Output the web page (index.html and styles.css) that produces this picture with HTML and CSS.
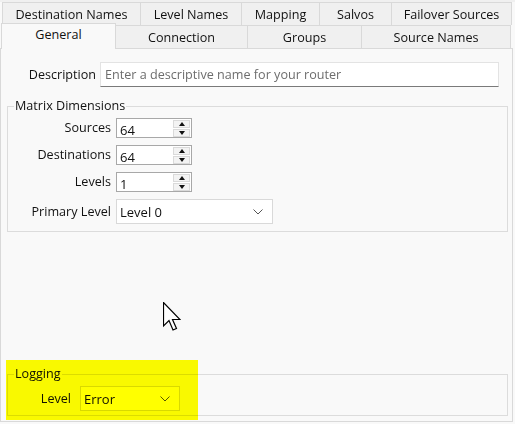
FILE: index.html
```html
<!DOCTYPE html>
<html lang="en">
<head>
  <meta charset="UTF-8">
  <title>Router Settings</title>
  <link rel="stylesheet" href="styles.css">
</head>
<body>
  <div class="window">
    <div class="tabs">
      <div class="tab-row row-back">
        <div class="tab tab-dest">Destination Names</div>
        <div class="tab tab-levels">Level Names</div>
        <div class="tab tab-mapping">Mapping</div>
        <div class="tab tab-salvos">Salvos</div>
        <div class="tab tab-failover">Failover Sources</div>
      </div>
      <div class="tab-row row-front">
        <div class="tab tab-general active">General</div>
        <div class="tab tab-connection">Connection</div>
        <div class="tab tab-groups">Groups</div>
        <div class="tab tab-sources">Source Names</div>
      </div>
    </div>

    <div class="panel">
      <div class="desc-row">
        <label class="desc-label">Description</label>
        <input class="text-input" type="text" placeholder="Enter a descriptive name for your router">
      </div>

      <fieldset class="group">
        <legend>Matrix Dimensions</legend>
        <div class="form-grid">
          <label>Sources</label>
          <div class="spin">
            <span class="spin-value">64</span>
            <div class="spin-buttons">
              <span class="spin-btn up"></span>
              <span class="spin-btn down"></span>
            </div>
          </div>

          <label>Destinations</label>
          <div class="spin">
            <span class="spin-value">64</span>
            <div class="spin-buttons">
              <span class="spin-btn up"></span>
              <span class="spin-btn down"></span>
            </div>
          </div>

          <label>Levels</label>
          <div class="spin">
            <span class="spin-value">1</span>
            <div class="spin-buttons">
              <span class="spin-btn up"></span>
              <span class="spin-btn down"></span>
            </div>
          </div>

          <label>Primary Level</label>
          <div class="combo combo-level">
            <span>Level 0</span>
            <svg class="chevron" width="10" height="6" viewBox="0 0 10 6"><path d="M0.5 0.5 L5 5 L9.5 0.5" fill="none" stroke="#555" stroke-width="1"/></svg>
          </div>
        </div>
      </fieldset>

      <fieldset class="group logging">
        <legend>Logging</legend>
        <div class="log-row">
          <label class="log-label">Level</label>
          <div class="combo combo-log">
            <span>Error</span>
            <svg class="chevron" width="10" height="6" viewBox="0 0 10 6"><path d="M0.5 0.5 L5 5 L9.5 0.5" fill="none" stroke="#555" stroke-width="1"/></svg>
          </div>
        </div>
      </fieldset>
    </div>

    <div class="highlight"></div>
    <svg class="cursor" width="18" height="30" viewBox="0 0 18 30">
      <path d="M0.5 0.5 L0.5 24 L6 18.5 L10 28 L13.5 26.5 L9.5 17.5 L17 17.5 Z" fill="#fff" stroke="#000" stroke-width="1.2" stroke-linejoin="miter"/>
    </svg>
  </div>
</body>
</html>
```

FILE: styles.css
```css
* {
  margin: 0;
  padding: 0;
  box-sizing: border-box;
}

body {
  background: #f0f0f0;
  font-family: 'Open Sans', 'Noto Sans', sans-serif;
  font-size: 12.6px;
  color: #111;
}

.window {
  position: relative;
  width: 515px;
  height: 424px;
  background: #f9f9f9;
}

/* tabs */
.tab-row {
  display: flex;
  height: 23px;
}

.row-back {
  margin-top: 2px;
  padding-left: 2px;
}

.row-front {
  padding-left: 1px;
}

.tab {
  display: flex;
  align-items: center;
  justify-content: center;
  height: 23px;
  background: #f0f0f0;
  border-top: 1px solid #d9d9d9;
  border-left: 1px solid #d9d9d9;
  white-space: nowrap;
}

.tab-dest { width: 138px; }
.tab-levels { width: 101px; }
.tab-mapping { width: 78px; }
.tab-salvos { width: 72px; }
.tab-failover { width: 121px; border-right: 1px solid #d9d9d9; }

.tab-general { width: 115px; }
.tab-connection { width: 132px; }
.tab-groups { width: 114px; }
.tab-sources { width: 150px; border-right: 1px solid #d9d9d9; }

.tab.active {
  position: relative;
  z-index: 1;
  height: 26px;
  margin-top: -2px;
  padding-bottom: 4px;
  background: #f9f9f9;
  border-right: 1px solid #d9d9d9;
  margin-right: -1px;
}

/* panel */
.panel {
  display: flex;
  flex-direction: column;
  width: 513px;
  height: 374px;
  background: #f9f9f9;
  border: 1px solid #d9d9d9;
  padding-top: 13px;
}

.desc-row {
  display: flex;
  align-items: center;
  gap: 4px;
}

.desc-label {
  width: 95px;
  text-align: right;
}

.text-input {
  width: 399px;
  height: 25px;
  padding: 0 4px;
  background: #fff;
  border: 1px solid #e3e3e3;
  border-bottom-color: #7a7a7a;
  font-family: inherit;
  font-size: 12.6px;
  outline: none;
}

.text-input::placeholder {
  color: #6d6d6d;
}

/* group boxes */
.group {
  margin: 11px 4px 0 6px;
  border: 1px solid #dcdcdc;
  padding: 4px 0 7px 0;
}

.group legend {
  margin-left: 6px;
  padding: 0 1px;
  line-height: 16px;
}

.form-grid {
  display: grid;
  grid-template-columns: 103px auto;
  column-gap: 5px;
  row-gap: 7px;
  align-items: center;
  justify-items: start;
}

.form-grid label {
  justify-self: end;
  line-height: 16px;
}

.spin {
  display: flex;
  align-items: center;
  justify-content: space-between;
  width: 76px;
  height: 20px;
  padding: 0 1px 0 3px;
  background: #fff;
  border: 1px solid #a8a8a8;
  font-size: 13px;
}

.spin-value {
  padding-top: 3px;
}

.spin-buttons {
  display: flex;
  flex-direction: column;
  gap: 1px;
}

.spin-btn {
  position: relative;
  width: 17px;
  height: 8px;
  background: #f3f3f3;
  border: 1px solid #dadada;
}

.spin-btn::after {
  content: '';
  position: absolute;
  left: 5px;
  border-left: 3px solid transparent;
  border-right: 3px solid transparent;
}

.spin-btn.up::after {
  top: 1px;
  border-bottom: 4px solid #111;
}

.spin-btn.down::after {
  top: 1px;
  border-top: 4px solid #111;
}

.combo {
  display: flex;
  align-items: center;
  justify-content: space-between;
  height: 25px;
  padding: 0 9px 0 3px;
  background: #fff;
  border: 1px solid #d9d9d9;
  font-size: 13px;
}

.combo-level {
  width: 157px;
}

.combo-log {
  width: 100px;
}

.logging {
  margin-top: auto;
  margin-bottom: 5px;
  padding: 5px 0 4px 0;
}

.logging legend {
  line-height: 14px;
}

.log-row {
  display: flex;
  align-items: center;
  gap: 9px;
}

.log-label {
  width: 63px;
  text-align: right;
}

/* overlays */
.highlight {
  position: absolute;
  left: 6px;
  top: 358px;
  width: 192px;
  height: 60px;
  background: #ffff00;
  mix-blend-mode: multiply;
}

.cursor {
  position: absolute;
  left: 163px;
  top: 300px;
}
```
